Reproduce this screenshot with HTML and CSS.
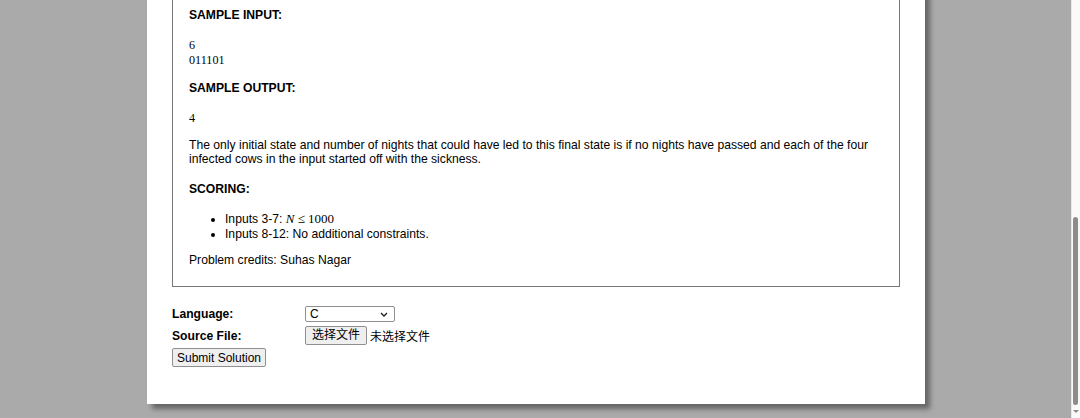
FILE: index.html
```html
<!DOCTYPE html>
<html lang="en">
<head>
  <meta charset="UTF-8" />
  <title>USACO</title>
  <link rel="stylesheet" href="styles.css">
</head>
<body>
<div class="panel">
  <div class="problem-text" id="probtext">
    <h4>SAMPLE INPUT:</h4>
    <pre class="in">6
011101
</pre>
    <h4>SAMPLE OUTPUT:</h4>
    <pre class="out">4
</pre>
    <p>The only initial state and number of nights that could have led to this final state is if no nights have passed and each of the four infected cows in the input started off with the sickness.</p>
    <h4 class="scoring">SCORING:</h4>
    <ul>
      <li>Inputs 3-7: <span class="math"><i>N</i> ≤ 1000</span></li>
      <li>Inputs 8-12: No additional constraints.</li>
    </ul>
    <p>Problem credits: Suhas Nagar</p>
  </div>

  <form class="submit-form" action="#">
    <div class="row row-lang">
      <span class="label">Language:</span>
      <span class="select-wrap">
        <select name="language" class="lang-select">
          <option>C</option>
          <option>C++11</option>
          <option>C++17</option>
          <option>Java</option>
          <option>Python 3.6.9</option>
        </select>
        <svg class="chevron" width="8" height="5" viewBox="0 0 8 5">
          <path d="M1 1 L4 4 L7 1" fill="none" stroke="#222" stroke-width="1.4" />
        </svg>
      </span>
    </div>
    <div class="row row-file">
      <span class="label">Source File:</span>
      <label class="file-pick">
        <input type="file" name="sourcefile" class="file-input" />
        <span class="file-btn">选择文件</span>
        <span class="file-name">未选择文件</span>
      </label>
    </div>
    <div class="row row-submit">
      <button type="submit" class="submit-btn">Submit Solution</button>
    </div>
  </form>
</div>

<!-- window scrollbar: the page is seen scrolled down to its end -->
<div class="scrollbar">
  <div class="scroll-thumb"></div>
  <div class="scroll-arrow"></div>
</div>
</body>
</html>
```

FILE: styles.css
```css
body {
  background-color: #aaaaaa;
  margin: 0 8px 0 0;
  font-family: "Liberation Sans", Arial, sans-serif;
  font-size: 12.15px;
  color: #000;
  overflow: hidden;
}
/* panel top sits above the window, the page being scrolled */
.panel {
  width: 728px;
  margin: -29px auto 14px;
  padding: 12px 25px 37px;
  background-color: #fff;
  box-shadow: 5px 5px 5px #666;
}
.problem-text {
  border: 1px solid #777;
  padding: 8px 16px 7px;
}
.problem-text h4 {
  font-size: 1em;
  margin: 16px 0;
}
.problem-text pre + h4 {
  margin-top: 13px;
}
.problem-text h4.scoring {
  margin-bottom: 15px;
}
.problem-text p {
  margin: 12px 0;
}
.problem-text pre {
  font-family: "Liberation Serif", serif;
  font-size: 1em;
  margin: 12px 0;
}
.problem-text ul {
  margin: 12px 0;
  padding-left: 36px;
}
.math {
  font-family: "Liberation Serif", serif;
  font-size: 13px;
}
.submit-form {
  margin-top: 18px;
  display: flex;
  flex-direction: column;
}
.row {
  display: flex;
  align-items: center;
}
.row-lang {
  min-height: 17px;
}
.row-file {
  margin-top: 4px;
}
.row-submit {
  margin-top: 3px;
}
.label {
  width: 133px;
  font-weight: bold;
}
.select-wrap {
  position: relative;
  display: inline-flex;
}
.lang-select {
  appearance: none;
  width: 90px;
  height: 16px;
  padding: 0 0 0 4px;
  border: 1px solid #8f8f8f;
  border-radius: 2px;
  background-color: #fff;
  color: #000;
  font-family: "Liberation Sans", Arial, sans-serif;
  font-size: 12px;
  line-height: 14px;
}
.chevron {
  position: absolute;
  right: 7px;
  top: 6px;
  pointer-events: none;
}
.file-pick {
  display: flex;
  align-items: center;
  gap: 3px;
  font-family: "Liberation Sans", "Noto Sans CJK SC", sans-serif;
  font-size: 12px;
}
.file-input {
  display: none;
}
.file-btn {
  display: inline-block;
  height: 17px;
  line-height: 17px;
  padding: 0 6px;
  border: 1px solid #8f8f8f;
  border-radius: 2px;
  background-color: #efefef;
}
.submit-btn {
  height: 19px;
  padding: 0 4px;
  border: 1px solid #8f8f8f;
  border-radius: 2px;
  background-color: #efefef;
  font-family: "Liberation Sans", Arial, sans-serif;
  font-size: 12px;
}
.scrollbar {
  position: fixed;
  top: 0;
  right: 0;
  bottom: 0;
  width: 8px;
  background-color: #fafafa;
  border-left: 1px solid #e8e8e8;
}
.scroll-thumb {
  position: absolute;
  top: 217px;
  left: 1px;
  width: 5px;
  height: 188px;
  border-radius: 3px;
  background-color: #8c8c8c;
}
.scroll-arrow {
  position: absolute;
  bottom: 5px;
  left: 1px;
  border-left: 3px solid transparent;
  border-right: 3px solid transparent;
  border-top: 3px solid #8c8c8c;
}
```
